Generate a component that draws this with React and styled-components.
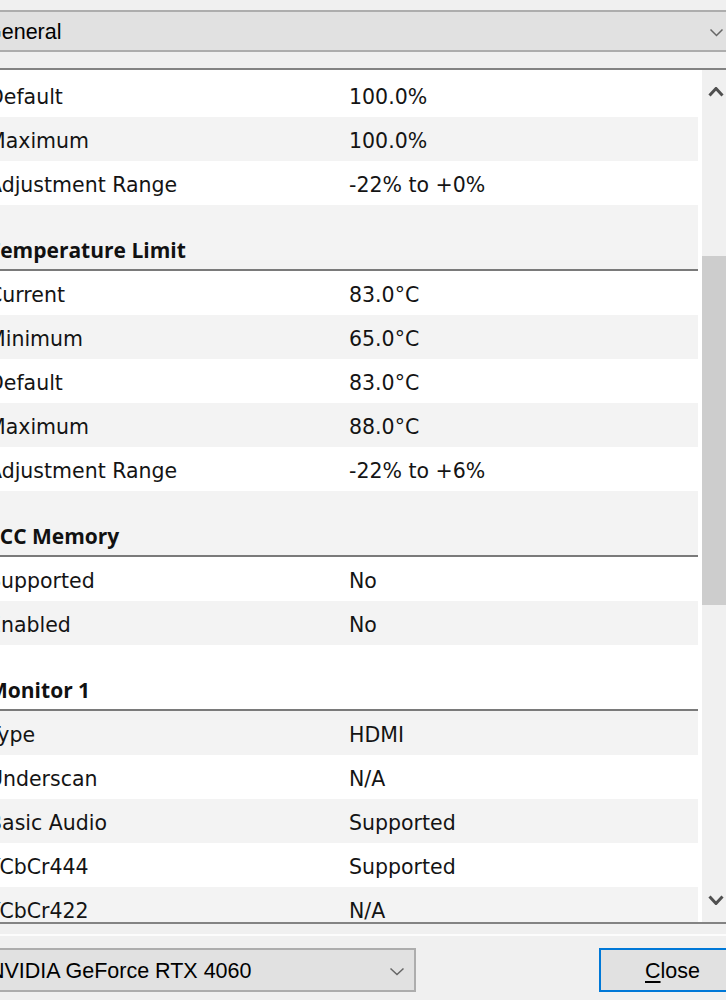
import React from "react";
import styled, { createGlobalStyle } from "styled-components";

const GlobalStyle = createGlobalStyle`
  html, body {
    margin: 0;
    padding: 0;
    background: #f0f0f0;
    overflow: hidden;
  }
  * { box-sizing: border-box; }
`;

const Window = styled.div`
  width: 726px;
  height: 1000px;
  overflow: hidden;
  display: flex;
  flex-direction: column;
  background: #f0f0f0;
  font-family: "DejaVu Sans", Verdana, sans-serif;
  color: #111;
`;

const Combo = styled.div`
  display: flex;
  align-items: center;
  height: ${(p) => p.$h}px;
  margin-left: -30px;
  width: ${(p) => p.$w}px;
  background: #e1e1e1;
  border: 2px solid #adadad;
  padding-left: ${(p) => p.$pad}px;
  padding-top: 2px;
  font-family: "Liberation Sans", Arial, sans-serif;
  font-size: 21.5px;
  color: #000;
  flex: none;
`;

const ComboText = styled.span`
  flex: 1;
  white-space: nowrap;
`;

const ChevronBox = styled.span`
  display: flex;
  align-items: center;
  justify-content: center;
  width: ${(p) => p.$w}px;
  margin-right: ${(p) => p.$mr}px;
  flex: none;
`;

const TopBar = styled.div`
  padding-top: 10px;
  flex: none;
`;

const ListBox = styled.div`
  margin-top: 16px;
  margin-left: -20px;
  width: 746px;
  height: 856px;
  border-top: 2px solid #838383;
  border-bottom: 2px solid #838383;
  display: flex;
  flex: none;
  background: #fff;
`;

const RowsArea = styled.div`
  width: 722px;
  padding-right: 4px;
  padding-top: 3px;
  overflow: hidden;
  background: #fff;
  flex: none;
`;

const Row = styled.div`
  display: grid;
  grid-template-columns: 361px 1fr;
  align-items: center;
  height: 44px;
  padding-left: 8px;
  padding-top: 3px;
  background: ${(p) => (p.$alt ? "#f3f3f3" : "#ffffff")};
  font-size: 20.5px;
  color: #141414;
  white-space: nowrap;
`;

const Label = styled.span``;
const Value = styled.span``;

const Header = styled.div`
  display: flex;
  align-items: flex-end;
  height: 66px;
  padding-left: 8px;
  padding-bottom: 5px;
  border-bottom: 2px solid #7a7a7a;
  background: ${(p) => (p.$alt ? "#f3f3f3" : "#ffffff")};
  font-family: "Open Sans", "Noto Sans", sans-serif;
  font-size: 21px;
  font-weight: 700;
  color: #111;
  white-space: nowrap;
`;

const Scrollbar = styled.div`
  width: 24px;
  flex: none;
  background: #f0f0f0;
  display: flex;
  flex-direction: column;
`;

const ScrollButton = styled.div`
  height: 44px;
  display: flex;
  align-items: center;
  justify-content: center;
  padding-left: 4px;
  flex: none;
`;

const Track = styled.div`
  flex: 1;
`;

const Thumb = styled.div`
  margin-top: 142px;
  height: 349px;
  background: #cdcdcd;
`;

const BottomArea = styled.div`
  flex: none;
  display: flex;
  flex-direction: column;
`;

const Etch = styled.div`
  margin-top: 10px;
  height: 2px;
  background: #fcfcfc;
`;

const BottomRow = styled.div`
  margin-top: 12px;
  display: flex;
  align-items: center;
`;

const CloseButton = styled.div`
  margin-left: auto;
  margin-right: -20px;
  width: 147px;
  height: 44px;
  border: 2px solid #0078d7;
  background: #e1e1e1;
  display: flex;
  align-items: center;
  justify-content: center;
  padding-top: 2px;
  font-family: "Liberation Sans", Arial, sans-serif;
  font-size: 21.5px;
  color: #000;
  flex: none;
`;

const Underline = styled.span`
  text-decoration: underline;
  text-underline-offset: 3px;
`;

const Chevron = ({ up, w = 14, h = 8, color = "#5a5a5a", sw = 1.6 }) => (
  <svg width={w} height={h} viewBox={`0 0 ${w} ${h}`}>
    <polyline
      points={up ? `1.5,${h - 1.5} ${w / 2},1.5 ${w - 1.5},${h - 1.5}` : `1.5,1.5 ${w / 2},${h - 1.5} ${w - 1.5},1.5`}
      fill="none"
      stroke={color}
      strokeWidth={sw}
    />
  </svg>
);

const data = [
  { t: "row", l: "Default", v: "100.0%" },
  { t: "row", l: "Maximum", v: "100.0%" },
  { t: "row", l: "Adjustment Range", v: "-22% to +0%" },
  { t: "head", l: "Temperature Limit" },
  { t: "row", l: "Current", v: "83.0°C" },
  { t: "row", l: "Minimum", v: "65.0°C" },
  { t: "row", l: "Default", v: "83.0°C" },
  { t: "row", l: "Maximum", v: "88.0°C" },
  { t: "row", l: "Adjustment Range", v: "-22% to +6%" },
  { t: "head", l: "ECC Memory" },
  { t: "row", l: "Supported", v: "No" },
  { t: "row", l: "Enabled", v: "No" },
  { t: "head", l: "Monitor 1" },
  { t: "row", l: "Type", v: "HDMI" },
  { t: "row", l: "Underscan", v: "N/A" },
  { t: "row", l: "Basic Audio", v: "Supported" },
  { t: "row", l: "YCbCr444", v: "Supported" },
  { t: "row", l: "YCbCr422", v: "N/A" },
];

export default function App() {
  return (
    <Window>
      <GlobalStyle />
      <TopBar>
        <Combo $h={42} $w={766} $pad={13}>
          <ComboText>General</ComboText>
          <ChevronBox $w={16} $mr={10}>
            <Chevron w={15} h={9} color="#666" sw={1.5} />
          </ChevronBox>
        </Combo>
      </TopBar>
      <ListBox>
        <RowsArea>
          {data.map((d, i) =>
            d.t === "head" ? (
              <Header key={i} $alt={i % 2 === 1}>
                {d.l}
              </Header>
            ) : (
              <Row key={i} $alt={i % 2 === 1}>
                <Label>{d.l}</Label>
                <Value>{d.v}</Value>
              </Row>
            )
          )}
        </RowsArea>
        <Scrollbar>
          <ScrollButton>
            <Chevron up w={16} h={10} color="#505050" sw={3} />
          </ScrollButton>
          <Track>
            <Thumb />
          </Track>
          <ScrollButton>
            <Chevron w={16} h={10} color="#505050" sw={3} />
          </ScrollButton>
        </Scrollbar>
      </ListBox>
      <BottomArea>
        <Etch />
        <BottomRow>
          <Combo $h={44} $w={446} $pad={17}>
            <ComboText>NVIDIA GeForce RTX 4060</ComboText>
            <ChevronBox $w={18} $mr={8}>
              <Chevron w={16} h={9} color="#666" sw={1.5} />
            </ChevronBox>
          </Combo>
          <CloseButton>
            <span>
              <Underline>C</Underline>lose
            </span>
          </CloseButton>
        </BottomRow>
      </BottomArea>
    </Window>
  );
}
